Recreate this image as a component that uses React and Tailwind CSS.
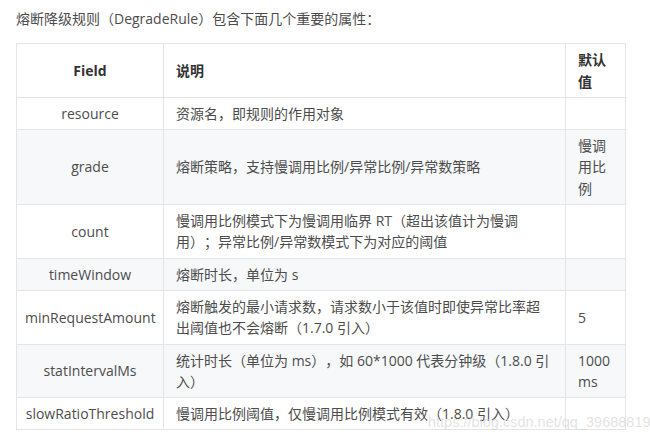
import React from 'react';

const rows = [
  { field: 'resource', desc: '资源名，即规则的作用对象', def: '' },
  { field: 'grade', desc: '熔断策略，支持慢调用比例/异常比例/异常数策略', def: '慢调用比例' },
  { field: 'count', desc: '慢调用比例模式下为慢调用临界 RT（超出该值计为慢调用）；异常比例/异常数模式下为对应的阈值', def: '' },
  { field: 'timeWindow', desc: '熔断时长，单位为 s', def: '' },
  { field: 'minRequestAmount', desc: '熔断触发的最小请求数，请求数小于该值时即使异常比率超出阈值也不会熔断（1.7.0 引入）', def: '5' },
  { field: 'statIntervalMs', desc: '统计时长（单位为 ms），如 60*1000 代表分钟级（1.8.0 引入）', def: '1000 ms' },
  { field: 'slowRatioThreshold', desc: '慢调用比例阈值，仅慢调用比例模式有效（1.8.0 引入）', def: '' },
];

const App = () => {
  return (
    <div className="relative w-[650px] h-[439px] bg-white overflow-hidden font-['Open_Sans','Noto_Sans_CJK_SC',sans-serif] text-[14px] leading-[21.3px] text-[#4d4d4d] [text-spacing-trim:space-all]">
      <p className="pl-4 pt-[8px] text-[#4d4d4d]">熔断降级规则（DegradeRule）包含下面几个重要的属性：</p>

      <table className="ml-4 mt-[14px] w-[609px] border-collapse table-fixed">
        <colgroup>
          <col className="w-[147px]" />
          <col className="w-[402px]" />
          <col className="w-[60px]" />
        </colgroup>
        <thead>
          <tr className="bg-white">
            <th className="border border-[#e3e5e8] px-3 py-[5px] text-center font-bold text-[#333]">Field</th>
            <th className="border border-[#e3e5e8] px-3 py-[5px] text-left font-bold text-[#333]">说明</th>
            <th className="border border-[#e3e5e8] px-3 py-[5px] text-left font-bold text-[#333]">默认值</th>
          </tr>
        </thead>
        <tbody>
          {rows.map((r, i) => (
            <tr key={r.field} className={i % 2 === 1 ? 'bg-[#f6f8fa]' : 'bg-white'}>
              <td className="border border-[#e3e5e8] px-2 py-[5px] text-center">{r.field}</td>
              <td className="border border-[#e3e5e8] px-3 py-[5px]">{r.desc}</td>
              <td className="border border-[#e3e5e8] px-3 py-[5px] break-all">{r.def}</td>
            </tr>
          ))}
        </tbody>
      </table>

      {/* watermark */}
      <div className="absolute left-[428px] top-[412px] text-[14.5px] font-['Liberation_Sans',sans-serif] text-[#d0d0d0]/60 whitespace-nowrap pointer-events-none">
        https://blog.csdn.net/qq_39688819
      </div>
    </div>
  );
};

export default App;
